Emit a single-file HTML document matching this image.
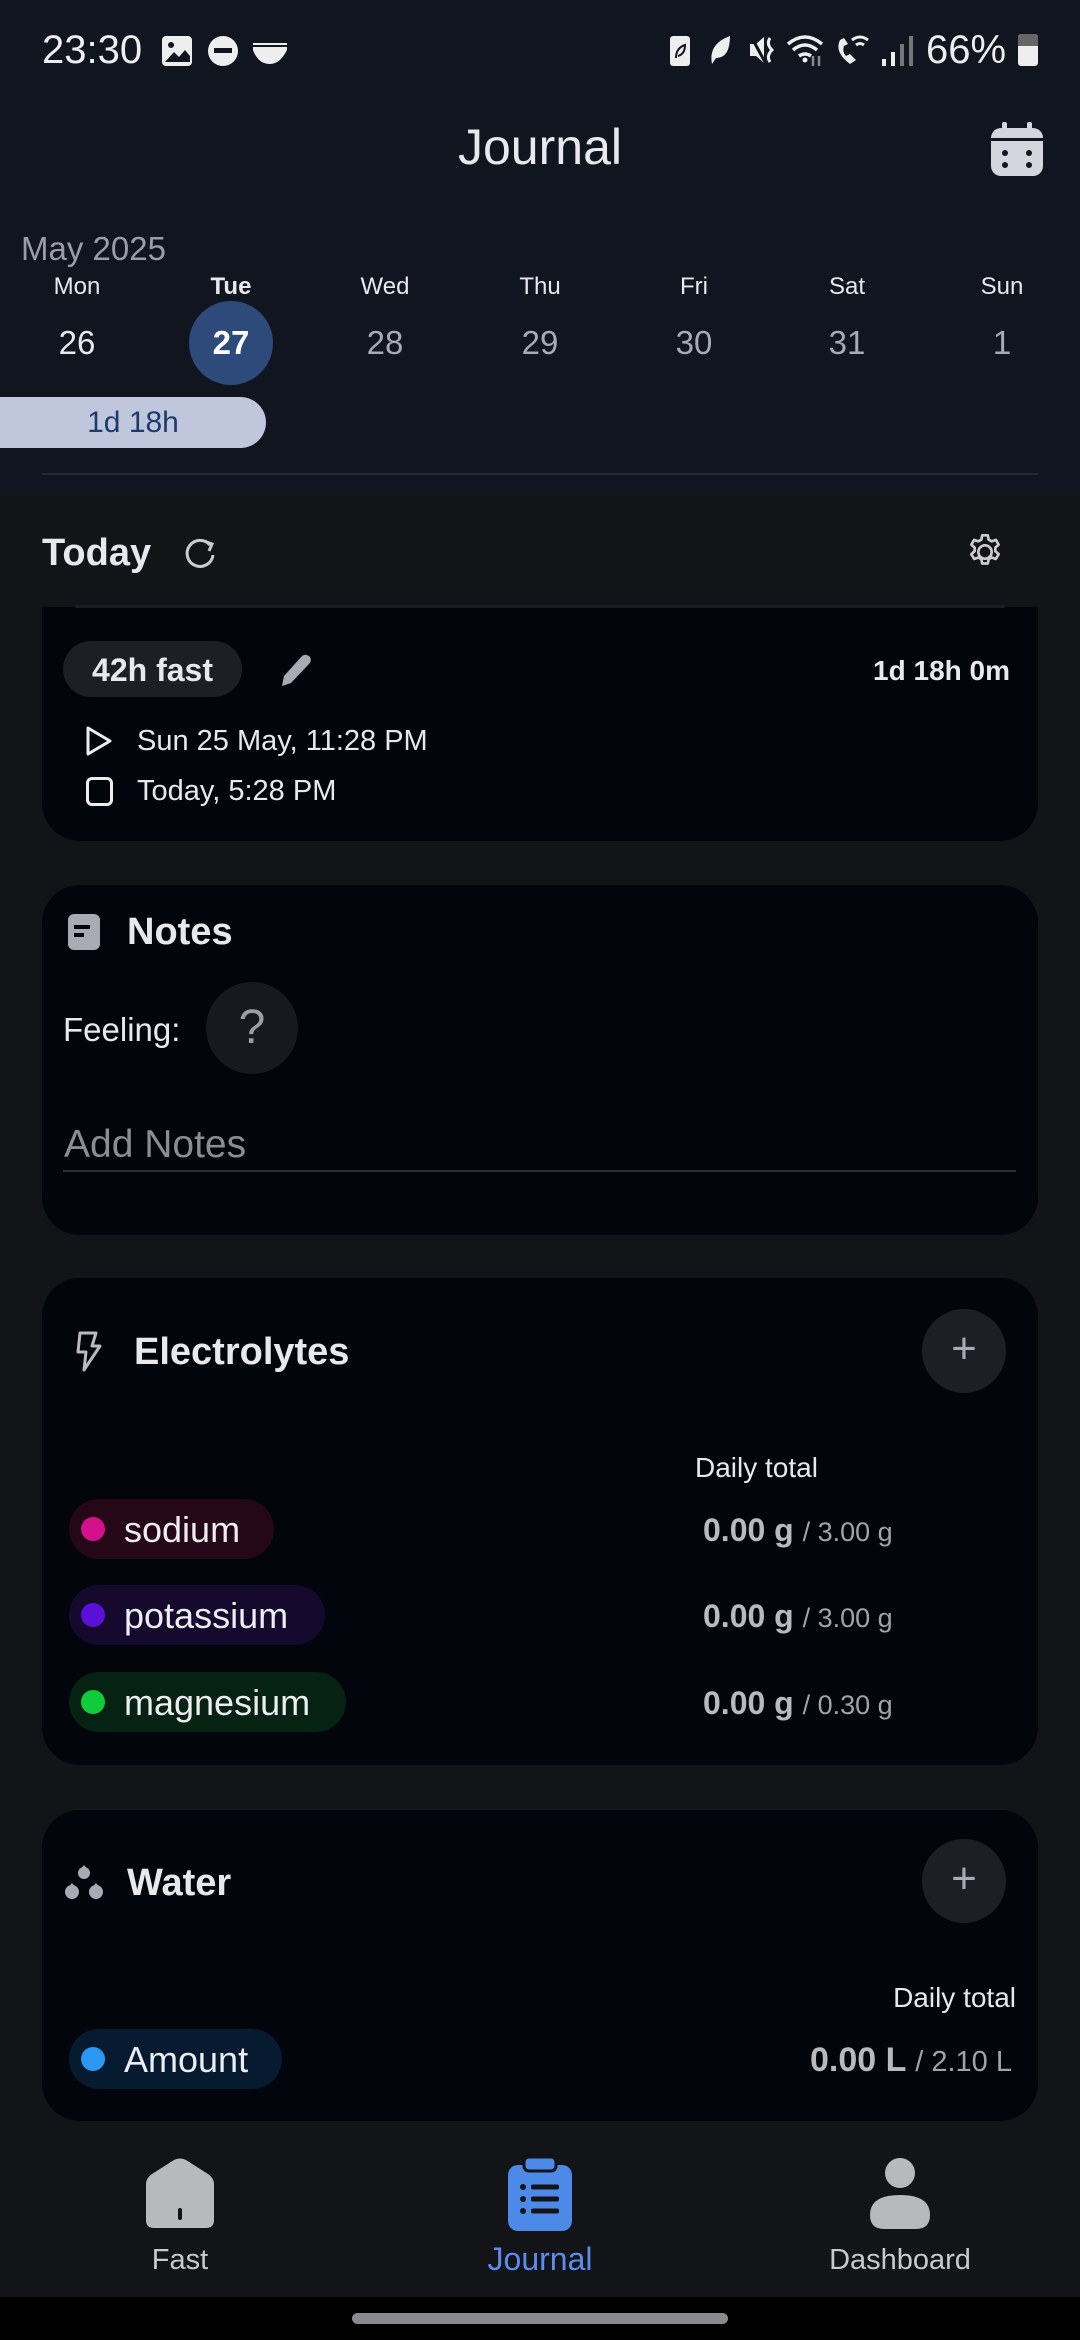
<!DOCTYPE html>
<html><head><meta charset="utf-8"><style>
*{margin:0;padding:0;box-sizing:border-box}
body{width:1080px;height:2340px;background:#131418;font-family:"Liberation Sans",sans-serif;color:#e8e9ee;position:relative;overflow:hidden}
.a{position:absolute}
.hdr{left:0;top:0;width:1080px;height:495px;background:#10151f}
.card{background:#02050c;border-radius:38px;left:42px;width:996px}
.c{text-align:center}
.wd{top:273px;width:120px;font-size:24px;color:#e8e9ee;text-align:center}
.dn{top:324px;width:120px;font-size:33px;color:#a8abb3;text-align:center}
.chip{left:69px;height:60px;border-radius:30px}
.chip .dot{position:absolute;left:12px;top:18px;width:24px;height:24px;border-radius:12px}
.chip span{position:absolute;left:55px;top:10px;font-size:36px;color:#eceef2}
.val{left:703px;font-size:32px;font-weight:bold;color:#b8bac0}
.val small{font-size:27px;font-weight:normal;color:#a0a3aa}
.plus{width:84px;height:84px;border-radius:42px;background:#1c1f26;color:#a8abb3;font-size:44px;text-align:center;line-height:80px}
</style></head><body>
<div class="a hdr"></div>
<!-- status bar -->
<div class="a" style="left:42px;top:28px;font-size:40px;color:#eee">23:30</div>
<svg class="a" style="left:160px;top:34px" width="130" height="34" viewBox="0 0 130 34">
<rect x="2" y="2" width="30" height="30" rx="4" fill="#eee"/><circle cx="11" cy="11" r="3" fill="#10151f"/><path d="M5 28 L14 18 L19 23 L25 16 L30 22 L30 28Z" fill="#10151f"/>
<circle cx="63" cy="17" r="15" fill="#eee"/><rect x="54" y="14" width="18" height="5" fill="#10151f"/>
<path d="M93 9 H127 V16 Q120 30 110 30 Q98 30 93 16Z" fill="#eee"/><rect x="93" y="11" width="34" height="2" fill="#10151f"/>
</svg>
<svg class="a" style="left:668px;top:32px" width="260" height="36" viewBox="0 0 260 36">
<rect x="2" y="4" width="20" height="30" rx="3" fill="#eee"/><path d="M8 26 Q8 16 17 13 Q17 22 10 24" stroke="#10151f" stroke-width="2" fill="none"/>
<path d="M44 32 Q40 12 62 4 Q62 26 48 26Z" fill="#eee"/>
<path d="M82 12 H88 L96 5 V31 L88 24 H82Z" fill="#eee"/><path d="M84 6 L98 32" stroke="#10151f" stroke-width="3"/><path d="M102 6 Q98 12 104 18 Q98 24 102 30" stroke="#eee" stroke-width="3" fill="none"/>
<path d="M120 12 Q137 -2 154 12 M125 18 Q137 8 149 18 M131 24 Q137 20 143 24" stroke="#eee" stroke-width="3.5" fill="none"/><circle cx="137" cy="28" r="2.5" fill="#eee"/><path d="M145 24 V34 M151 34 V24" stroke="#888" stroke-width="2.5"/>
<path d="M172 8 Q166 20 182 32 L188 28 L182 22 L178 24 Q174 20 176 14 L180 12 L176 6Z" fill="#eee"/><path d="M184 8 Q192 2 200 8 M188 13 Q192 10 196 13" stroke="#eee" stroke-width="3" fill="none"/>
<rect x="214" y="27" width="4" height="7" fill="#eee"/><rect x="223" y="20" width="4" height="14" fill="#eee"/><rect x="232" y="12" width="4" height="22" fill="#777"/><rect x="241" y="4" width="4" height="30" fill="#777"/>
</svg>
<div class="a" style="left:926px;top:28px;font-size:40px;color:#eee">66%</div>
<div class="a" style="left:1018px;top:34px;width:20px;height:32px;border-radius:3px;background:#eee"></div>
<div class="a" style="left:1018px;top:34px;width:20px;height:12px;border-radius:3px 3px 0 0;background:#666"></div>

<div class="a c" style="left:340px;top:118px;width:400px;font-size:50px;color:#e8e9ee">Journal</div>
<svg class="a" style="left:989px;top:120px" width="56" height="58" viewBox="0 0 56 58">
<rect x="2" y="8" width="52" height="48" rx="10" fill="#d4d6de"/><rect x="13" y="2" width="5" height="14" rx="2" fill="#d4d6de"/><rect x="38" y="2" width="5" height="14" rx="2" fill="#d4d6de"/>
<rect x="2" y="18" width="52" height="3" fill="#10151f"/>
<circle cx="16" cy="33" r="3" fill="#10151f"/><circle cx="40" cy="33" r="3" fill="#10151f"/><circle cx="16" cy="45" r="3" fill="#10151f"/><circle cx="40" cy="45" r="3" fill="#10151f"/>
</svg>
<div class="a" style="left:21px;top:230px;font-size:33px;color:#9a9da5">May 2025</div>
<div class="a" style="left:189px;top:301px;width:84px;height:84px;border-radius:42px;background:#2e4a7a"></div>
<div class="a wd" style="left:17px">Mon</div><div class="a wd" style="left:171px;font-weight:bold">Tue</div><div class="a wd" style="left:325px">Wed</div><div class="a wd" style="left:480px">Thu</div><div class="a wd" style="left:634px">Fri</div><div class="a wd" style="left:787px">Sat</div><div class="a wd" style="left:942px">Sun</div>
<div class="a dn" style="left:17px;color:#e8e9ee">26</div><div class="a dn" style="left:171px;color:#fff;font-weight:bold">27</div><div class="a dn" style="left:325px">28</div><div class="a dn" style="left:480px">29</div><div class="a dn" style="left:634px">30</div><div class="a dn" style="left:787px">31</div><div class="a dn" style="left:942px">1</div>
<div class="a" style="left:0;top:397px;width:266px;height:51px;border-radius:0 26px 26px 0;background:#c0c7dd"></div>
<div class="a c" style="left:0;top:406px;width:266px;font-size:30px;color:#1e3a6e">1d 18h</div>
<div class="a" style="left:42px;top:473px;width:996px;height:2px;background:#232a36"></div>

<!-- Today -->
<div class="a" style="left:42px;top:532px;font-size:38px;font-weight:bold">Today</div>
<svg class="a" style="left:182px;top:535px" width="36" height="36" viewBox="0 0 36 36"><path d="M28 10 A13 13 0 1 0 31 20" stroke="#ccc" stroke-width="3" fill="none"/><path d="M22 6 L30 9 L27 16" stroke="#ccc" stroke-width="3" fill="none"/></svg>
<svg class="a" style="left:965px;top:532px" width="40" height="40" viewBox="0 0 24 24"><path d="M12 8a4 4 0 1 0 0 8 4 4 0 0 0 0-8z" stroke="#ccc" stroke-width="1.6" fill="none"/><path d="M10.3 2h3.4l.5 2.6 1.8 1 2.5-.9 1.7 2.9-2 1.8v2.1l2 1.8-1.7 2.9-2.5-.9-1.8 1-.5 2.6h-3.4l-.5-2.6-1.8-1-2.5.9-1.7-2.9 2-1.8v-2.1l-2-1.8 1.7-2.9 2.5.9 1.8-1z" stroke="#ccc" stroke-width="1.6" fill="none" stroke-linejoin="round"/></svg>

<!-- fast card -->
<div class="a card" style="top:607px;height:234px;border-radius:0 0 38px 38px"></div>
<div class="a" style="left:75px;top:605px;width:930px;height:3px;background:#1a1d24"></div>
<div class="a" style="left:63px;top:641px;width:179px;height:56px;border-radius:28px;background:#1c1f26"></div>
<div class="a c" style="left:63px;top:652px;width:179px;font-size:32px;font-weight:bold">42h fast</div>
<svg class="a" style="left:278px;top:652px" width="36" height="36" viewBox="0 0 36 36"><path d="M4 34 L6 24 L24 4 Q28 1 32 5 Q34 9 31 12 L13 31Z" fill="#a8abb3"/></svg>
<div class="a" style="right:70px;top:655px;font-size:28px;font-weight:bold">1d 18h 0m</div>
<svg class="a" style="left:84px;top:725px" width="30" height="32" viewBox="0 0 30 32"><path d="M4 3 L26 16 L4 29Z" stroke="#eee" stroke-width="3" fill="none" stroke-linejoin="round"/></svg>
<div class="a" style="left:137px;top:725px;font-size:29px">Sun 25 May, 11:28 PM</div>
<div class="a" style="left:86px;top:777px;width:27px;height:29px;border:3px solid #eee;border-radius:6px"></div>
<div class="a" style="left:137px;top:775px;font-size:29px">Today, 5:28 PM</div>

<!-- notes -->
<div class="a card" style="top:885px;height:350px"></div>
<div class="a" style="left:68px;top:914px;width:32px;height:36px;border-radius:6px;background:#a8abb3"></div>
<div class="a" style="left:74px;top:925px;width:16px;height:4px;background:#02050c"></div>
<div class="a" style="left:74px;top:933px;width:10px;height:4px;background:#02050c"></div>
<div class="a" style="left:127px;top:911px;font-size:38px;font-weight:bold">Notes</div>
<div class="a" style="left:63px;top:1011px;font-size:33px">Feeling:</div>
<div class="a c" style="left:206px;top:982px;width:92px;height:92px;border-radius:46px;background:#16191f;font-size:48px;color:#9a9da5;line-height:92px">?</div>
<div class="a" style="left:64px;top:1123px;font-size:39px;color:#8a8d94">Add Notes</div>
<div class="a" style="left:63px;top:1170px;width:953px;height:2px;background:#2a2e37"></div>

<!-- electrolytes -->
<div class="a card" style="top:1278px;height:487px"></div>
<svg class="a" style="left:74px;top:1330px" width="30" height="42" viewBox="0 0 30 42"><path d="M6 3 H22 L18 16 H26 L10 40 L12 22 H4Z" stroke="#bbb" stroke-width="3" fill="none" stroke-linejoin="round"/></svg>
<div class="a" style="left:134px;top:1331px;font-size:38px;font-weight:bold">Electrolytes</div>
<div class="a plus" style="left:922px;top:1309px">+</div>
<div class="a" style="left:695px;top:1452px;font-size:28px">Daily total</div>
<div class="a chip" style="top:1499px;width:205px;background:#250817"><div class="dot" style="background:#d4108a"></div><span>sodium</span></div>
<div class="a chip" style="top:1585px;width:256px;background:#150a2e"><div class="dot" style="background:#5a10d8"></div><span>potassium</span></div>
<div class="a chip" style="top:1672px;width:277px;background:#062212"><div class="dot" style="background:#10cc3a"></div><span>magnesium</span></div>
<div class="a val" style="top:1512px">0.00 g <small>/ 3.00 g</small></div>
<div class="a val" style="top:1598px">0.00 g <small>/ 3.00 g</small></div>
<div class="a val" style="top:1685px">0.00 g <small>/ 0.30 g</small></div>

<!-- water -->
<div class="a card" style="top:1810px;height:311px"></div>
<svg class="a" style="left:64px;top:1864px" width="40" height="38" viewBox="0 0 40 38"><circle cx="20" cy="9" r="6" fill="#a8abb3"/><circle cx="8" cy="28" r="7" fill="#a8abb3"/><circle cx="32" cy="28" r="7" fill="#a8abb3"/><path d="M20 1 L15 7 H25Z M8 19 L3 25 H13Z M32 19 L27 25 H37Z" fill="#a8abb3"/></svg>
<div class="a" style="left:127px;top:1862px;font-size:38px;font-weight:bold">Water</div>
<div class="a plus" style="left:922px;top:1839px">+</div>
<div class="a" style="right:64px;top:1982px;font-size:28px">Daily total</div>
<div class="a chip" style="top:2029px;width:213px;background:#061a30"><div class="dot" style="background:#2a98f0"></div><span>Amount</span></div>
<div class="a" style="right:68px;top:2041px;font-size:34px;font-weight:bold;color:#b8bac0">0.00 L <small style="font-size:29px;font-weight:normal;color:#a0a3aa">/ 2.10 L</small></div>

<!-- nav -->
<div class="a" style="left:0;top:2136px;width:1080px;height:161px;background:#131418"></div>
<svg class="a" style="left:144px;top:2158px" width="72" height="72" viewBox="0 0 72 72"><path d="M2 26 Q2 20 8 16 L30 2 Q36 -1 42 2 L64 16 Q70 20 70 26 V62 Q70 70 62 70 H10 Q2 70 2 62Z" fill="#b8b9bc"/><rect x="34" y="50" width="4" height="12" rx="2" fill="#131418"/></svg>
<div class="a c" style="left:100px;top:2244px;width:160px;font-size:29px;color:#c8c9cc">Fast</div>
<svg class="a" style="left:508px;top:2157px" width="64" height="74" viewBox="0 0 64 74"><rect x="0" y="8" width="64" height="66" rx="10" fill="#4d8ae8"/><rect x="16" y="0" width="32" height="14" rx="5" fill="#4d8ae8" stroke="#131418" stroke-width="3"/><g fill="#131418"><circle cx="15" cy="30" r="3"/><circle cx="15" cy="42" r="3"/><circle cx="15" cy="54" r="3"/><rect x="23" y="27.5" width="28" height="5" rx="2"/><rect x="23" y="39.5" width="28" height="5" rx="2"/><rect x="23" y="51.5" width="28" height="5" rx="2"/></g></svg>
<div class="a c" style="left:440px;top:2241px;width:200px;font-size:32px;color:#5b8def">Journal</div>
<svg class="a" style="left:870px;top:2157px" width="60" height="72" viewBox="0 0 60 72"><circle cx="30" cy="16" r="15" fill="#b8b9bc"/><path d="M0 58 Q0 38 30 38 Q60 38 60 58 Q60 72 46 72 H14 Q0 72 0 58Z" fill="#b8b9bc"/></svg>
<div class="a c" style="left:800px;top:2244px;width:200px;font-size:29px;color:#c8c9cc">Dashboard</div>
<div class="a" style="left:0;top:2297px;width:1080px;height:43px;background:#000"></div>
<div class="a" style="left:352px;top:2313px;width:376px;height:11px;border-radius:6px;background:#8a8a8e"></div>
</body></html>
